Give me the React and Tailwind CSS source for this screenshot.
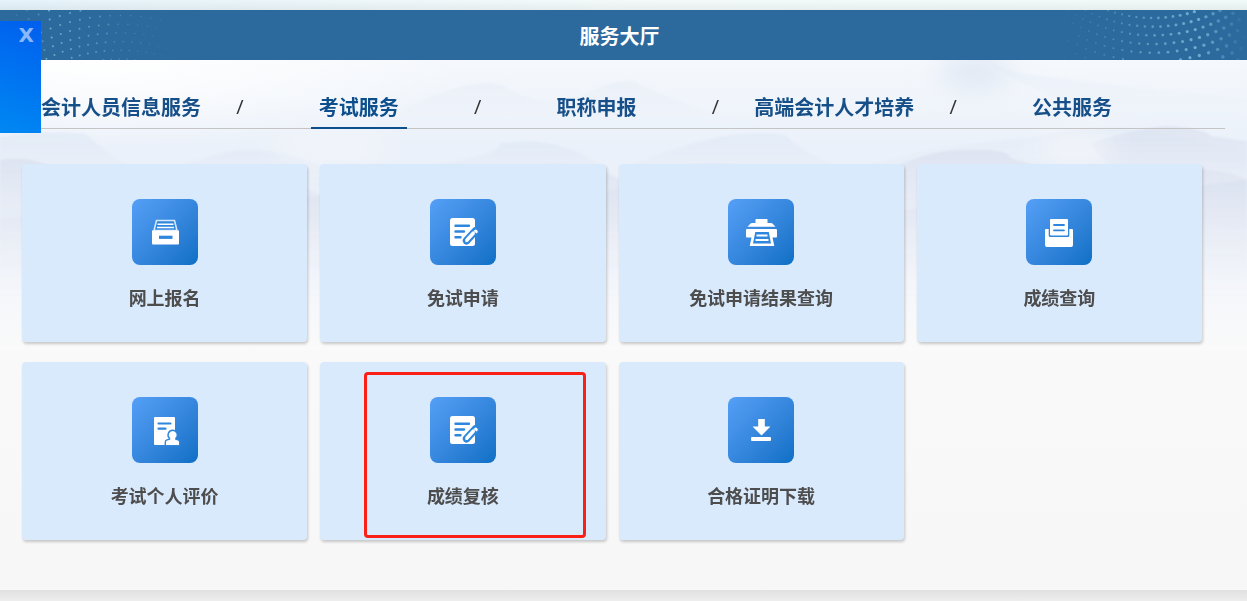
/**
 * Service hall page: title banner, service tabs and the grid of exam services
 */

const tabs = [
    { name: '会计人员信息服务', active: false },
    { name: '考试服务', active: true },
    { name: '职称申报', active: false },
    { name: '高端会计人才培养', active: false },
    { name: '公共服务', active: false },
];

const BLUE = '#2f87dd';

function ArchiveIcon() {
    return (
        <>
            <path d="M24.500 21.500h18l2.500 10h-23z" fill={BLUE} stroke="#d5e7fb" strokeWidth="1.600" />
            <path d="M25.500 25.300h16M25 28.500h17" stroke="#fff" strokeWidth="1.400" />
            <path d="M20 31.500h27v13a1 1 0 0 1-1 1H21a1 1 0 0 1-1-1z" fill="#fff" />
            <path d="M27 36.700h13.500v3.200H27z" fill={BLUE} />
        </>
    );
}

function EditIcon() {
    return (
        <>
            <rect x="20" y="19" width="25" height="28" rx="2.5" fill="#fff" />
            <path d="M25.5 26.7h13.500M25.5 32.5h8.500M25.5 38.3h5" stroke={BLUE} strokeWidth="2.4" strokeLinecap="round" />
            <path d="M36.6 41.6l8.8-9.6" stroke={BLUE} strokeWidth="7.6" strokeLinecap="round" />
            <path d="M33.8 45l.4-4.5 4 3.6z" fill={BLUE} />
            <path d="M37 41l6.2-6.8" stroke="#fff" strokeWidth="3.6" strokeLinecap="round" />
            <path d="M35.4 43.2l.4-2.4 2.4 2z" fill="#fff" />
            <path d="M44.4 31.2a2 2 0 0 1 3 2.6l-.8.8-3-2.6z" fill="#fff" />
        </>
    );
}

function PrinterIcon() {
    return (
        <>
            <path d="M27.5 20.5q0-.5.5-.5h11q.5 0 .5.5V24h3.5q1 0 1.7.8l2.8 3H19.5l2.8-3q.7-.8 1.7-.8h3.5z" fill="#fff" />
            <path d="M19 30h29q1 0 1 1v6.5q0 1-1 1h-3.500l1.8 8.500H21.7l1.8-8.500H19q-1 0-1-1V31q0-1 1-1z" fill="#fff" />
            <path d="M27.3 33h13.500l2.2 11.500H25z" fill={BLUE} />
            <path d="M28.5 36.500h11M27.5 41h13" stroke="#fff" strokeWidth="2" />
        </>
    );
}

function TrayIcon() {
    return (
        <>
            <path d="M20 30h26q1 0 1 1v15q0 2-2 2H21q-2 0-2-2V31q0-1 1-1z" fill="#fff" />
            <path d="M22.7 29h20.6v7.5q0 1.5-1.5 1.5H24.200q-1.5 0-1.5-1.5z" fill={BLUE} />
            <rect x="24" y="20" width="18" height="16.5" rx="1" fill="#fff" />
            <path d="M28 26h10M28 31.300h10" stroke={BLUE} strokeWidth="1.8" strokeLinecap="round" />
        </>
    );
}

function PersonIcon() {
    return (
        <>
            <rect x="22" y="20" width="21" height="28" rx="1" fill="#fff" />
            <path d="M26.5 26.500h12M26.5 31.700h7" stroke={BLUE} strokeWidth="2.2" strokeLinecap="round" />
            <path
                d="M40.7 34a4 4 0 0 0-2.5 7.100v1.700l-3 .8q-1.200.4-1.200 1.600V48h13v-2.800q0-1.200-1.200-1.600l-2.600-.8v-1.700A4 4 0 0 0 40.7 34z"
                fill="#fff"
                stroke={BLUE}
                strokeWidth="2.8"
                paintOrder="stroke"
            />
        </>
    );
}

function DownloadIcon() {
    return (
        <>
            <path d="M30.2 22h6.600v7.500h5q.7 0 .2.600l-8 7.900q-.5.400-1 0l-8-7.900q-.5-.6.200-.6h5z" fill="#fff" />
            <rect x="23" y="40" width="20" height="4" rx="1" fill="#fff" />
        </>
    );
}

const services = [
    { name: '网上报名', Icon: ArchiveIcon },
    { name: '免试申请', Icon: EditIcon },
    { name: '免试申请结果查询', Icon: PrinterIcon },
    { name: '成绩查询', Icon: TrayIcon },
    { name: '考试个人评价', Icon: PersonIcon },
    { name: '成绩复核', Icon: EditIcon, marked: true },
    { name: '合格证明下载', Icon: DownloadIcon },
];

// dots on concentric rings; dir -1 shows the top of the rings, dir 1 the bottom
function makeDots(cx, cy, dir, firstRadius, count, from, to) {
    const dots = [];
    for (let ring = 0; ring < count; ring++) {
        const radius = firstRadius + ring * 8.7;
        for (let a = from + ring * 0.012; a < to; a += 0.053) {
            const x = cx + radius * Math.sin(a);
            const y = cy + dir * radius * Math.cos(a);
            if (y > 0 && y < 50) dots.push({ x, y });
        }
    }
    return dots;
}

const leftDots = makeDots(120, 198, -1, 149, 12, -0.8, 0.45);
const rightDots = makeDots(110, -130, 1, 138, 12, -0.65, 0.75);

function Banner() {
    return (
        <header className="relative flex h-[50px] items-center justify-center bg-[#2c699d]">
            <svg className="absolute left-0 top-0 h-[50px] w-[200px]" viewBox="0 0 200 50" aria-hidden="true">
                {leftDots.map((d, i) => (
                    <circle
                        key={i}
                        cx={d.x}
                        cy={d.y}
                        r={d.x < 110 ? 1 : 0.8}
                        fill="#7fc4dc"
                        opacity={Math.max(0, d.x < 45 ? d.x / 90 : 0.8 - (d.x - 45) / 170)}
                    />
                ))}
            </svg>
            <h1 className="pr-2 pt-0.5 text-xl font-bold text-white">服务大厅</h1>
            <svg className="absolute right-0 top-0 h-[50px] w-[204px]" viewBox="0 0 204 50" aria-hidden="true">
                {rightDots.map((d, i) => (
                    <circle
                        key={i}
                        cx={d.x}
                        cy={d.y}
                        r={0.6 + d.x / 150}
                        fill="#7cc0dc"
                        opacity={Math.max(0, d.x < 155 ? d.x / 190 : 0.8 - (d.x - 155) / 60)}
                    />
                ))}
            </svg>
        </header>
    );
}

function Mountains() {
    return (
        <svg className="absolute inset-x-0 top-0 h-[290px] w-full" viewBox="0 0 1247 290" preserveAspectRatio="none" aria-hidden="true">
            <defs>
                <linearGradient id="sky" x1="0" y1="0" x2="0" y2="1">
                    <stop offset="0" stopColor="#f5f8fc" />
                    <stop offset="0.3" stopColor="#ebf1fa" />
                    <stop offset="0.55" stopColor="#ebf0f8" />
                    <stop offset="0.8" stopColor="#f5f7fb" />
                    <stop offset="1" stopColor="#fafafa" />
                </linearGradient>
                <radialGradient id="glow" cx="0.08" cy="0" r="0.3">
                    <stop offset="0" stopColor="#fff" />
                    <stop offset="1" stopColor="#fff" stopOpacity="0" />
                </radialGradient>
                <linearGradient id="far" x1="0" y1="0" x2="0" y2="1">
                    <stop offset="0" stopColor="#dfe8f5" stopOpacity="0.7" />
                    <stop offset="1" stopColor="#eef3fa" stopOpacity="0" />
                </linearGradient>
                <linearGradient id="near" x1="0" y1="0" x2="0" y2="1">
                    <stop offset="0" stopColor="#d3daeb" stopOpacity="0.9" />
                    <stop offset="1" stopColor="#f3f5fa" stopOpacity="0" />
                </linearGradient>
                <filter id="soft" x="-5%" y="-5%" width="110%" height="110%">
                    <feGaussianBlur stdDeviation="0.8" />
                </filter>
                <filter id="haze" x="-100%" y="-300%" width="300%" height="700%">
                    <feGaussianBlur stdDeviation="14" />
                </filter>
            </defs>
            <rect width="1247" height="290" fill="url(#sky)" />
            <rect width="1247" height="290" fill="url(#glow)" />
            <ellipse cx="975" cy="12" rx="36" ry="14" fill="#dce5f3" filter="url(#haze)" />
            <g filter="url(#soft)">
                <path d="M380 60Q440 30 470 25T510 30Q550 50 590 32T640 25Q680 42 760 70z" fill="url(#far)" opacity="0.6" />
                <path d="M985 0Q1010 14 1050 17Q1130 28 1247 38V70Q1060 60 985 0z" fill="url(#far)" opacity="0.6" />
                <path d="M0 77Q40 70 85 74Q102 88 118 100T165 115V150H0z" fill="url(#far)" />
                <path d="M140 120Q215 92 240 90T300 98Q340 118 420 107T500 84Q530 78 560 86T620 120V160H140z" fill="url(#far)" />
                <path d="M620 110Q700 76 745 74T790 80Q810 96 850 112V150H620z" fill="url(#far)" />
                <path d="M850 112Q910 92 940 88T1040 76Q1080 66 1120 68T1247 92V160H850z" fill="url(#far)" opacity="0.7" />
                <path d="M1090 84Q1150 63 1180 67T1210 76L1247 81V170Q1150 160 1090 84z" fill="url(#near)" opacity="0.6" />
                <path d="M0 100Q25 96 45 104T110 122Q210 132 310 130Q350 150 460 120T620 120V230H0z" fill="url(#near)" opacity="0.6" />
                <path d="M620 122Q690 98 740 106T860 128Q910 92 960 90T1010 98Q1050 112 1130 108T1247 119V230H620z" fill="url(#near)" opacity="0.6" />
                <path d="M0 158Q20 158 60 150T320 136Q430 170 620 128Q720 160 900 150T1247 120V250H0z" fill="url(#near)" opacity="0.5" />
            </g>
            <ellipse cx="330" cy="88" rx="60" ry="8" fill="#f8f8fa" filter="url(#haze)" />
            <ellipse cx="1075" cy="88" rx="40" ry="10" fill="#f8f8fa" filter="url(#haze)" />
        </svg>
    );
}

function TabBar() {
    return (
        <nav className="relative mx-[22px] border-b border-[#c4c4c4] pt-[26px]">
            <ul className="-ml-5 mr-[34px] flex">
                {tabs.map((tab, i) => (
                    <li key={tab.name} className="flex flex-1">
                        <div className="flex flex-1 justify-center">
                            <a
                                href="#"
                                className={
                                    tab.active
                                        ? '-mb-px flex h-[43px] items-center whitespace-nowrap border-b-2 border-[#0c4f8c] px-2 text-xl font-bold text-[#0c4f8c]'
                                        : '-mb-px flex h-[43px] items-center whitespace-nowrap border-b-2 border-transparent text-xl font-bold text-[#174f88]'
                                }
                            >
                                {tab.name}
                            </a>
                        </div>
                        {i < tabs.length - 1 && (
                            <span className="flex w-0 items-center justify-center font-['Open_Sans',sans-serif] text-xl text-[#333]">/</span>
                        )}
                    </li>
                ))}
            </ul>
        </nav>
    );
}

function ServiceCard({ name, Icon, marked }) {
    return (
        <a
            href="#"
            className="relative flex h-[178px] flex-col items-center rounded bg-[#d9eafd] pt-[35px] shadow-[1px_2px_3px_rgba(0,0,0,0.2)]"
        >
            <span className="size-[66px] rounded-lg bg-linear-to-br from-[#559ff7] to-[#0b70c5]">
                <svg className="size-full" viewBox="0 0 66 66" fill="none" aria-hidden="true">
                    <Icon />
                </svg>
            </span>
            <span className="mt-[18px] text-lg font-bold text-[#4d4d4d]">{name}</span>
            {marked && (
                <span className="absolute bottom-0.5 left-11 right-5 top-2.5 rounded border-3 border-[#fb2015]"></span>
            )}
        </a>
    );
}

function App() {
    return (
        <div className="relative flex min-h-screen flex-col bg-[#ececec] font-['Noto_Sans_CJK_SC',sans-serif]">
            <div className="h-2.5 bg-linear-to-r from-[#e6f3fa] via-[#f4fafa] to-[#f0faf9]">
                <div className="h-full bg-linear-to-b from-transparent to-black/5"></div>
            </div>
            <Banner />
            <main className="relative bg-linear-to-b from-[#fcfcfd] to-[#f7f7f7] pb-[50px]">
                <Mountains />
                <TabBar />
                <div className="relative ml-[22px] mr-[45px] mt-[35px] grid grid-cols-4 gap-x-[13px] gap-y-5">
                    {services.map((service) => (
                        <ServiceCard key={service.name} {...service} />
                    ))}
                </div>
            </main>
            <div className="h-[11px] bg-linear-to-b from-[#e1e1e1] to-[#ededed]"></div>

            {/* side panel, collapsed to its close button */}
            <aside className="absolute left-0 top-[21px] flex h-28 w-[41px] items-start justify-end bg-linear-[20deg] from-[#0088f3] to-[#005fee] pr-[7px]">
                <button type="button" aria-label="关闭" className="font-['DejaVu_Sans',sans-serif] text-xl font-bold text-[#8ab8fa]">
                    X
                </button>
            </aside>
        </div>
    );
}

export default App;
